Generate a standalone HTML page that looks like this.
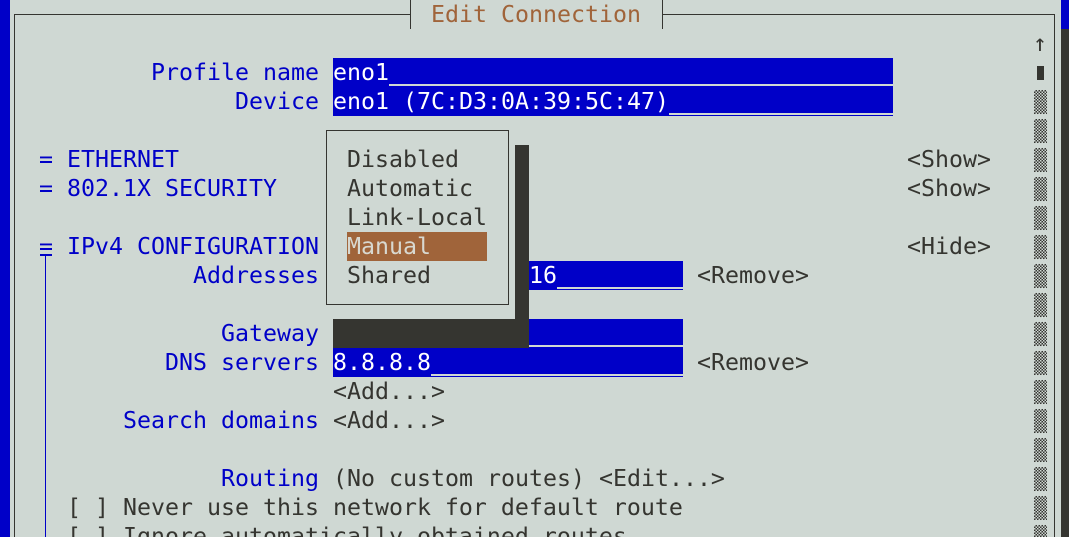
<!DOCTYPE html>
<html style="height:537px;overflow:hidden"><head><meta charset="utf-8"><style>
body{margin:0;width:1069px;height:537px;overflow:hidden;background:#cfd8d3;position:relative;font-family:"DejaVu Sans Mono","Liberation Mono",monospace;font-size:23.25px;}
.t{position:absolute;height:29px;line-height:29px;white-space:pre;color:#353530;}
.b{color:#0000c8;}
.r{position:absolute;}
.f{position:absolute;background:#0000c8;height:29px;}
.u{position:absolute;height:2px;background:#cfd8d3;}
.s{position:absolute;left:1034px;width:13px;height:24px;background:repeating-conic-gradient(#353530 0 25%,#cfd8d3 0 50%) 0 0/3px 3px;}
</style></head><body>
<div class="r" style="left:0;top:0;width:10px;height:537px;background:#0000c8"></div>
<div class="r" style="left:1061px;top:0;width:8px;height:537px;background:#353530"></div>
<div class="r" style="left:1061px;top:0;width:8px;height:29px;background:#0000c8"></div>
<div class="r" style="left:14px;top:14px;width:396px;height:1px;background:#353530"></div>
<div class="r" style="left:662px;top:14px;width:393px;height:1px;background:#353530"></div>
<div class="r" style="left:14px;top:14px;width:1px;height:523px;background:#353530"></div>
<div class="r" style="left:1054px;top:14px;width:1px;height:523px;background:#353530"></div>
<div class="r" style="left:410px;top:0;width:1px;height:29px;background:#353530"></div>
<div class="r" style="left:662px;top:0;width:1px;height:29px;background:#353530"></div>
<div class="t" style="left:431px;top:0;color:#a0643a">Edit Connection</div>

<div class="t" style="left:1033px;top:29px">↑</div>
<div class="r" style="left:1037px;top:66px;width:7px;height:14px;background:#353530"></div>
<div class="s" style="top:90px"></div><div class="s" style="top:119px"></div><div class="s" style="top:148px"></div><div class="s" style="top:177px"></div><div class="s" style="top:206px"></div><div class="s" style="top:235px"></div><div class="s" style="top:264px"></div><div class="s" style="top:293px"></div><div class="s" style="top:322px"></div><div class="s" style="top:351px"></div><div class="s" style="top:380px"></div><div class="s" style="top:409px"></div><div class="s" style="top:438px"></div><div class="s" style="top:467px"></div><div class="s" style="top:496px"></div><div class="s" style="top:525px"></div>

<div class="f" style="left:333px;top:58px;width:560px"></div>
<div class="u" style="left:389px;top:84px;width:504px"></div>
<div class="t" style="left:333px;top:58px;color:#fff">eno1</div>
<div class="f" style="left:333px;top:87px;width:560px"></div>
<div class="u" style="left:669px;top:113px;width:224px"></div>
<div class="t" style="left:333px;top:87px;color:#fff">eno1 (7C:D3:0A:39:5C:47)</div>

<div class="t b" style="left:151px;top:58px">Profile name</div>
<div class="t b" style="left:235px;top:87px">Device</div>
<div class="t b" style="left:39px;top:145px">= ETHERNET</div>
<div class="t b" style="left:39px;top:174px">= 802.1X SECURITY</div>
<div class="t b" style="left:39px;top:232px">= IPv4 CONFIGURATION</div>
<div class="r" style="left:45px;top:254px;width:1px;height:283px;background:#0000c8"></div>
<div class="r" style="left:40px;top:254px;width:12px;height:2px;background:#0000c8"></div>
<div class="t" style="left:907px;top:145px">&lt;Show&gt;</div>
<div class="t" style="left:907px;top:174px">&lt;Show&gt;</div>
<div class="t" style="left:907px;top:232px">&lt;Hide&gt;</div>

<div class="t b" style="left:193px;top:261px">Addresses</div>
<div class="f" style="left:529px;top:261px;width:154px"></div>
<div class="u" style="left:557px;top:287px;width:126px"></div>
<div class="t" style="left:529px;top:261px;color:#fff">16</div>
<div class="t" style="left:697px;top:261px">&lt;Remove&gt;</div>

<div class="t b" style="left:221px;top:319px">Gateway</div>
<div class="f" style="left:333px;top:319px;width:350px"></div>
<div class="u" style="left:333px;top:345px;width:350px"></div>
<div class="t b" style="left:165px;top:348px">DNS servers</div>
<div class="f" style="left:333px;top:348px;width:350px"></div>
<div class="u" style="left:431px;top:374px;width:252px"></div>
<div class="t" style="left:333px;top:348px;color:#fff">8.8.8.8</div>
<div class="t" style="left:697px;top:348px">&lt;Remove&gt;</div>
<div class="t" style="left:333px;top:377px">&lt;Add...&gt;</div>
<div class="t b" style="left:123px;top:406px">Search domains</div>
<div class="t" style="left:333px;top:406px">&lt;Add...&gt;</div>
<div class="t b" style="left:221px;top:464px">Routing</div>
<div class="t" style="left:333px;top:464px">(No custom routes) &lt;Edit...&gt;</div>
<div class="t" style="left:67px;top:493px">[ ] Never use this network for default route</div>
<div class="t" style="left:67px;top:522px">[ ] Ignore automatically obtained routes</div>

<div class="r" style="left:515px;top:145px;width:14px;height:203px;background:#353530"></div>
<div class="r" style="left:333px;top:319px;width:196px;height:29px;background:#353530"></div>
<div class="r" style="left:326px;top:130px;width:181px;height:173px;border:1px solid #353530;background:#cfd8d3"></div>
<div class="r" style="left:347px;top:232px;width:140px;height:29px;background:#a0643a"></div>
<div class="t" style="left:347px;top:145px">Disabled</div>
<div class="t" style="left:347px;top:174px">Automatic</div>
<div class="t" style="left:347px;top:203px">Link-Local</div>
<div class="t" style="left:347px;top:232px;color:#d8d8d0">Manual</div>
<div class="t" style="left:347px;top:261px">Shared</div>
</body></html>
